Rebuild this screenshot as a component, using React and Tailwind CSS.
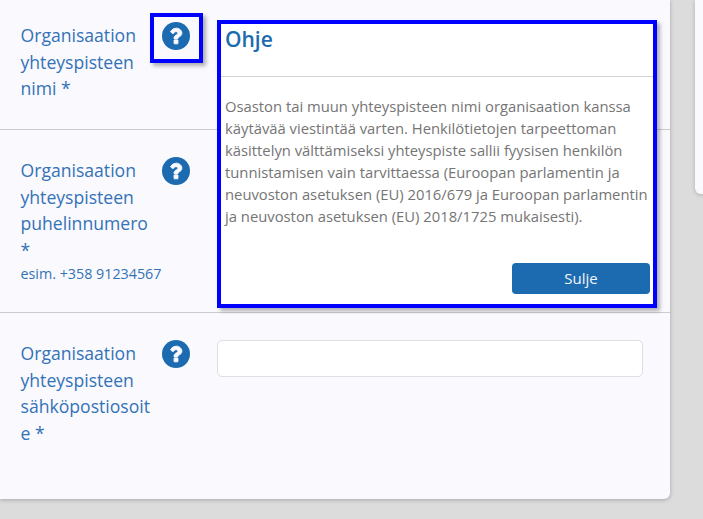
import React from "react";

const fontClass = "font-['Open_Sans',sans-serif]";

// Solid circle with a heavy white question mark
const HelpIcon = () => (
  <svg viewBox="128 128 1536 1536" className="block h-[28px] w-[28px]">
    <circle cx="896" cy="896" r="768" className="fill-current" />
    <path
      className="fill-[#f9f9fe] stroke-[#f9f9fe]"
      strokeWidth="60"
      transform="translate(896 896) scale(.84) translate(-896 -896)"
      d="M1024 1376v-192q0-14-9-23t-23-9h-192q-14 0-23 9t-9 23v192q0 14 9 23t23 9h192q14 0 23-9t9-23zM1280 704q0-88-55.5-163t-138.5-116-170-41q-243 0-371 213-15 24 8 42l132 100q7 6 19 6 16 0 25-12 53-68 86-92 34-24 86-24 48 0 85.5 26t37.5 59q0 38-20 61t-68 45q-63 28-115.5 86.5t-52.5 125.5v36q0 14 9 23t23 9h192q14 0 23-9t9-23q0-19 21.5-49.5t54.5-49.5q32-18 49-28.5t46-35 44.5-48 28-60.5 12.5-81z"
    />
  </svg>
);

// Single form row: label column, help icon, field column
const FormRow = ({ lines, hint, focused, last, children, height }) => (
  <div className={`flex pt-[27px] pl-[21px] ${height} ${last ? "" : "border-b border-[#cccccc]"}`}>
    <div className="w-[131px] shrink-0 -ml-[0.5px]">
      <label className="block text-[17.6px] leading-[26.6px] text-[#3472b6] [overflow-wrap:anywhere]">
        {lines}
      </label>
      {hint && <p className="mt-[2px] text-[14.3px] leading-[18px] text-[#3472b6] whitespace-nowrap">{hint}</p>}
    </div>
    <div className="relative w-[28px] h-[28px] ml-[10.5px] shrink-0 text-[#1c6bb0]">
      <HelpIcon />
      {focused && (
        <div className="absolute -left-[12.5px] -top-[9px] w-[53.5px] h-[50px] border-4 border-[#0000ff] shadow-[3px_3px_4px_rgba(0,0,0,0.3)]"></div>
      )}
    </div>
    <div className="ml-[27px] w-[426px] shrink-0">{children}</div>
  </div>
);

const App = () => {
  return (
    <div className={`relative h-[519px] w-[703px] overflow-hidden bg-[#dcdcdc] ${fontClass}`}>
      <div className="flex items-start gap-[25px]">
        {/* Main form card */}
        <div className="w-[670px] shrink-0 rounded-br-md bg-[#f9f9fe] shadow-[0_1px_4px_rgba(0,0,0,0.25)]">
          <div className="-mt-[5px]">
            <FormRow lines="Organisaation yhteyspisteen nimi *" focused height="h-[135px]" />
            <FormRow
              lines="Organisaation yhteyspisteen puhelinnumero *"
              hint="esim. +358 91234567"
              height="h-[183px]"
            />
            <FormRow lines="Organisaation yhteyspisteen sähköpostiosoite *" last height="h-[186px]">
              <input
                type="text"
                className="block h-[37px] w-full rounded-[5px] border border-[#dfdfdf] bg-white"
              />
            </FormRow>
          </div>
        </div>

        {/* Side card, mostly out of view */}
        <div className="h-[194px] w-[100px] shrink-0 rounded-bl-md bg-[#f9f9fe] shadow-[0_1px_4px_rgba(0,0,0,0.2)]"></div>
      </div>

      {/* Help dialog */}
      <div className="absolute left-[217px] top-[20px] flex h-[288px] w-[440px] flex-col border-4 border-[#0000ff] bg-white shadow-[3px_3px_4px_rgba(0,0,0,0.3)]">
        <div className="h-[53px] border-b border-[#d4d4d4] pl-[4px]">
          <h2 className="text-[21px] leading-[30px] font-semibold text-[#1c6bb0]">Ohje</h2>
        </div>
        <p className="mt-[18px] px-[4px] text-[14.8px] leading-[22px] text-[#757575]">
          Osaston tai muun yhteyspisteen nimi organisaation kanssa käytävää viestintää varten. Henkilötietojen
          tarpeettoman käsittelyn välttämiseksi yhteyspiste sallii fyysisen henkilön tunnistamisen vain tarvittaessa
          (Euroopan parlamentin ja neuvoston asetuksen (EU) 2016/679 ja Euroopan parlamentin ja neuvoston asetuksen
          (EU) 2018/1725 mukaisesti).
        </p>
        <div className="mt-auto flex justify-end pr-[3px] pb-[10px]">
          <button
            type="button"
            className="h-[31px] w-[138px] rounded-[4px] bg-[#1c6bb0] text-[15px] font-medium text-[#f2f6fa]"
          >
            Sulje
          </button>
        </div>
      </div>
    </div>
  );
};

export default App;
